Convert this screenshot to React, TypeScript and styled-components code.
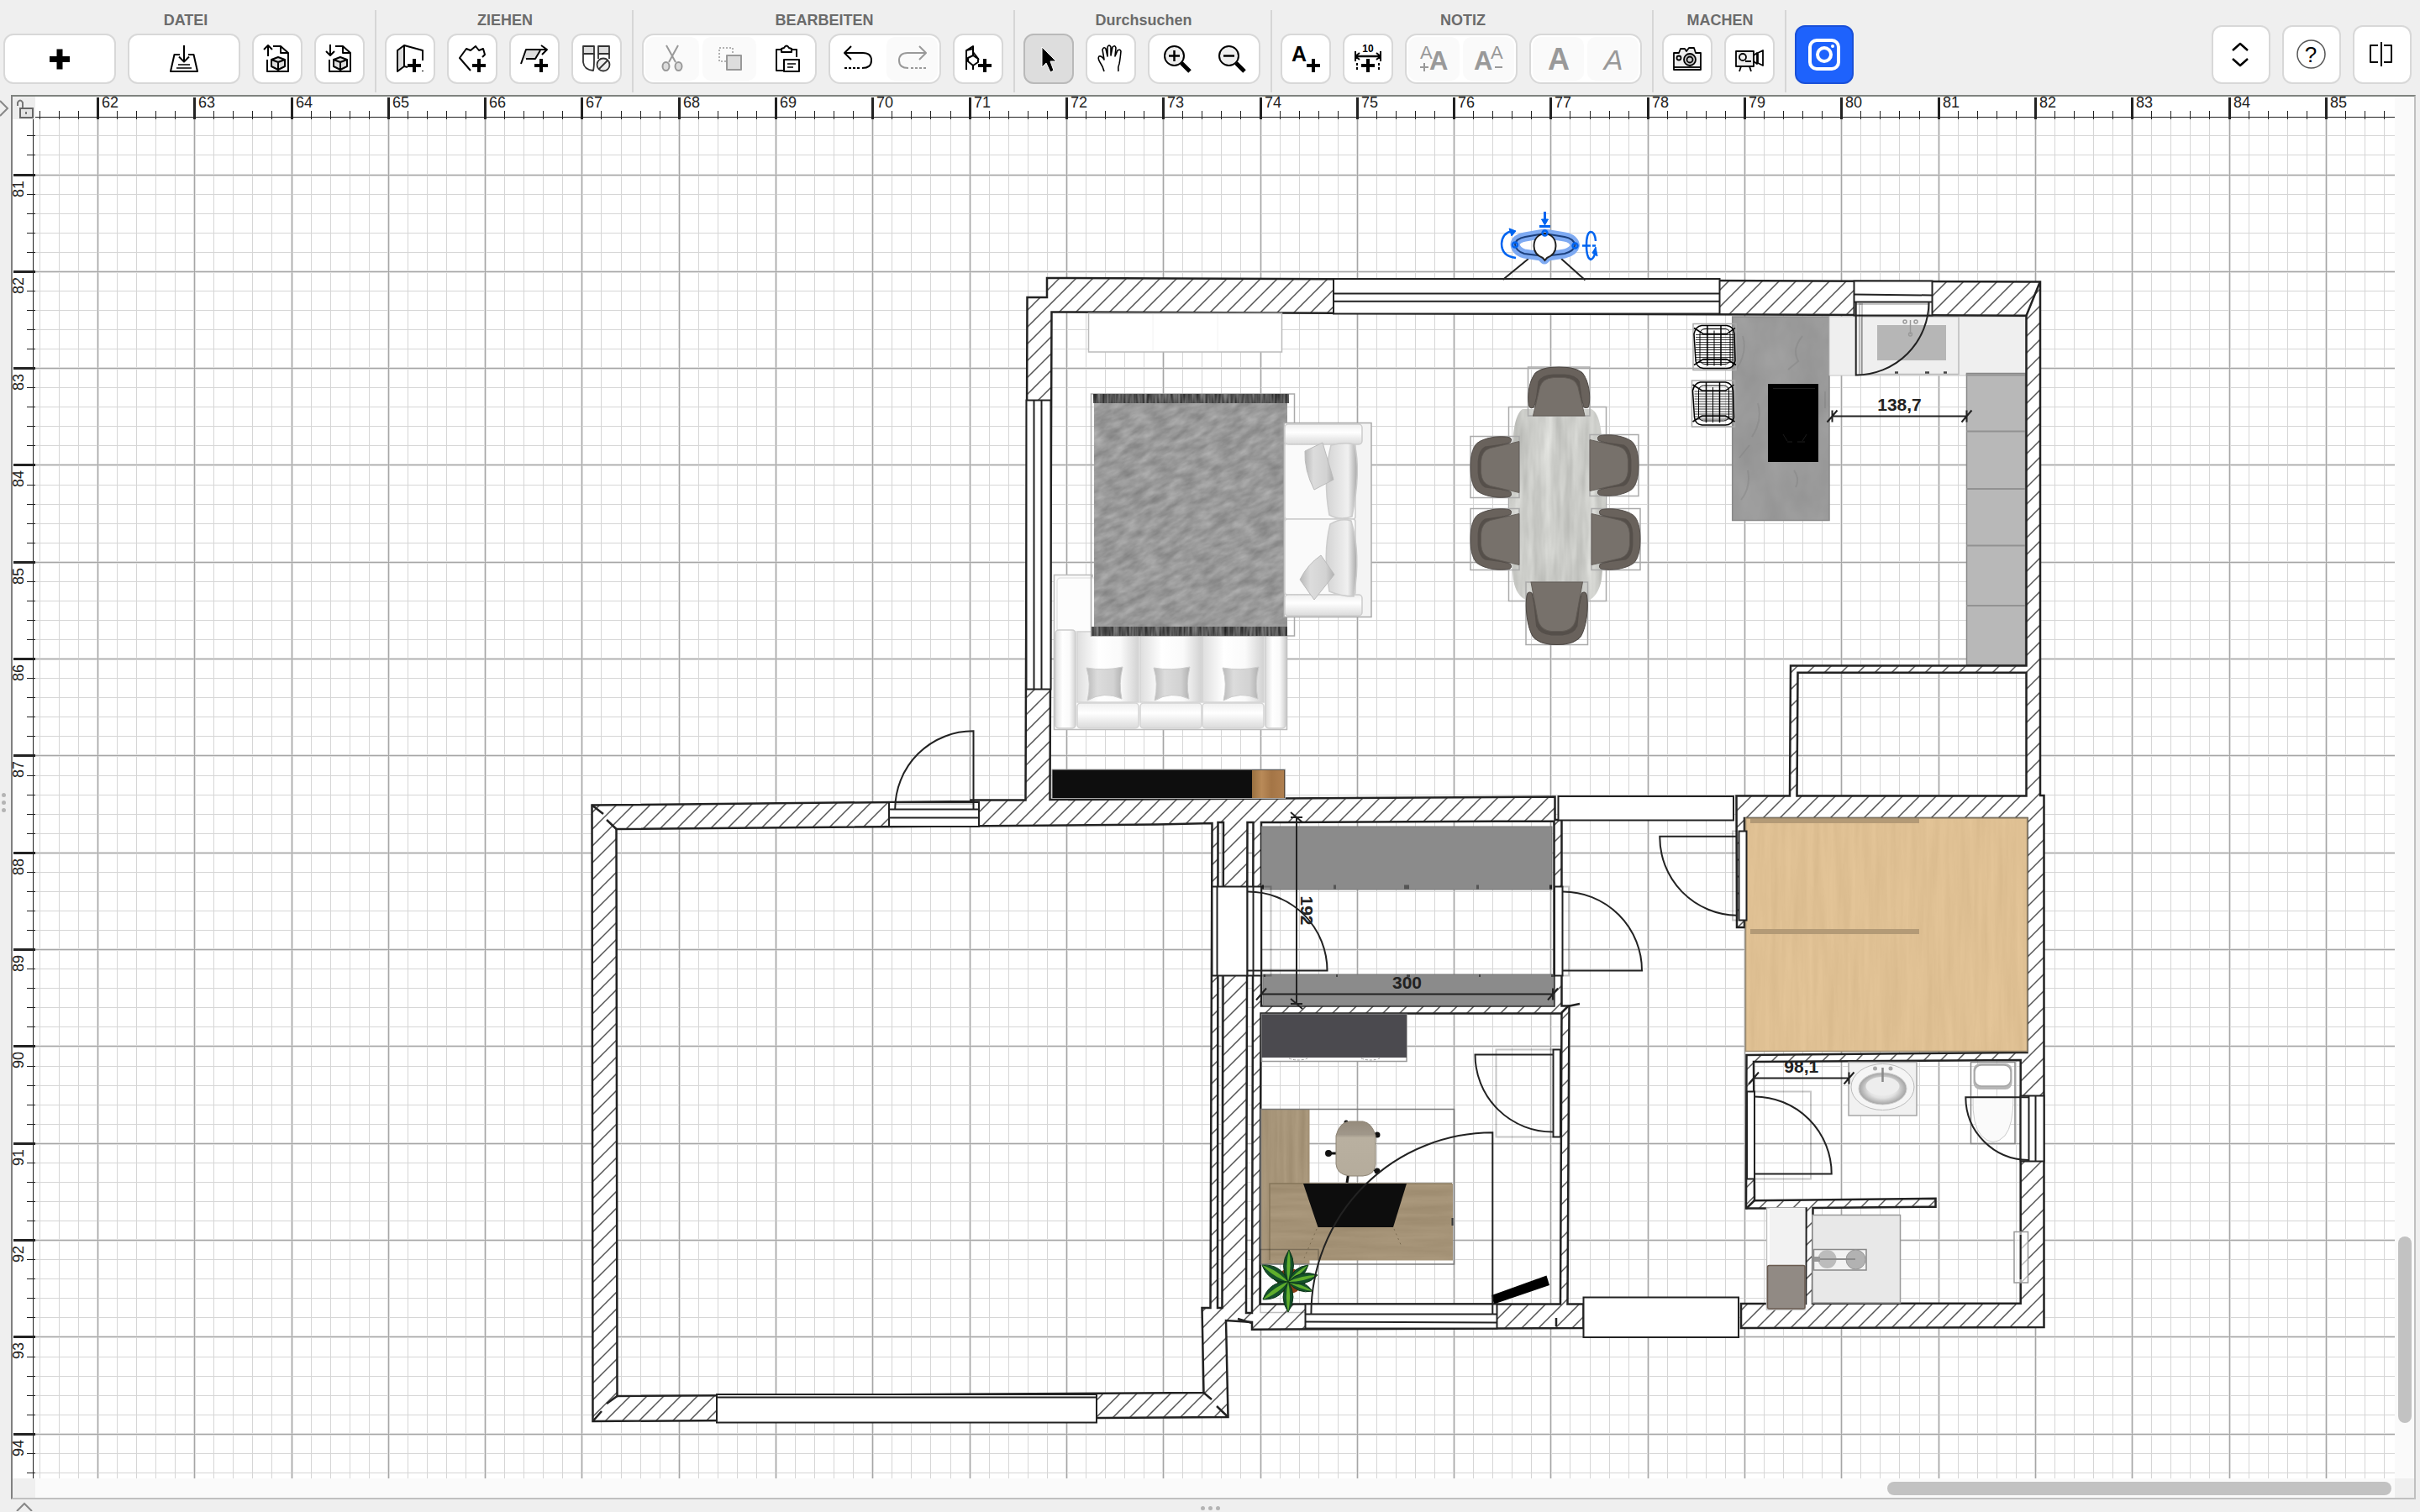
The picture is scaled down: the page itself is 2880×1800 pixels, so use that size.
import React, { useEffect, useState } from "react";
import styled, { createGlobalStyle, css } from "styled-components";

const INK = "#222222";
const FONT = '"Liberation Sans", Arial, Helvetica, sans-serif';

const GlobalStyle = createGlobalStyle`
  *, *::before, *::after { box-sizing: border-box; }
  html, body, #root { height: 100%; }
  body { margin: 0; background: #efefef; font-family: ${FONT}; color: ${INK}; }
`;

/* ---------- shell ---------- */

const Page = styled.div`
  display: flex;
  flex-direction: column;
  height: 100vh;
  overflow: hidden;
  background: #efefef;
`;

const Toolbar = styled.header`
  display: flex;
  flex: none;
  align-items: flex-start;
  padding: 12px 10px 3px 4px;
`;

const Group = styled.section<{ $first?: boolean }>`
  flex: none;
  height: 98px;
  padding: 2px 12px 0 ${(p) => (p.$first ? 0 : 10)}px;
  border-right: 2px solid #d6d6d6;
`;

const GroupTitle = styled.h2`
  margin: 0 0 6px;
  padding-left: 4px;
  font-size: 18px;
  line-height: 20px;
  font-weight: 700;
  text-align: center;
  color: #6b6b6b;
`;

const ButtonRow = styled.div`
  display: flex;
  gap: 14px;
`;

const face = css`
  display: flex;
  align-items: center;
  justify-content: center;
  padding: 0;
  font-family: inherit;
  color: #000;
  svg { display: block; flex: none; overflow: visible; }
`;

const ToolButton = styled.button<{ $wide?: boolean; $active?: boolean }>`
  ${face}
  width: ${(p) => (p.$wide ? 134 : 60)}px;
  height: 60px;
  border: 2px solid ${(p) => (p.$active ? "#b9b9b9" : "#d8d8d8")};
  border-radius: 12px;
  background: ${(p) => (p.$active ? "#dddddd" : "#ffffff")};
`;

const Segmented = styled.div<{ $three?: boolean }>`
  display: flex;
  gap: 4px;
  width: ${(p) => (p.$three ? 208 : 134)}px;
  height: 60px;
  padding: 2px;
  border: 2px solid #d8d8d8;
  border-radius: 14px;
  background: #fff;
`;

const Segment = styled.button`
  ${face}
  flex: 1;
  border: 0;
  border-radius: 10px;
  background: transparent;
  &:disabled { background: #fafafa; color: #999; }
`;

const LargeButton = styled.button<{ $brand?: boolean }>`
  ${face}
  width: 70px;
  height: 70px;
  border: 2px solid ${(p) => (p.$brand ? "#1a50d8" : "#d8d8d8")};
  border-radius: 12px;
  background: ${(p) => (p.$brand ? "#1e62fc" : "#ffffff")};
  color: ${(p) => (p.$brand ? "#fff" : "#000")};
`;

const BrandSlot = styled.div`
  padding: 18px 0 0 10px;
`;

const RightTools = styled.div`
  display: flex;
  gap: 14px;
  margin-left: auto;
  padding-top: 18px;
`;

const Workspace = styled.main`
  display: flex;
  flex: 1;
  min-height: 0;
  padding-right: 5px;
`;

const SideHandle = styled.div`
  display: flex;
  flex: none;
  flex-direction: column;
  align-items: flex-start;
  justify-content: space-between;
  width: 13px;
  padding: 5px 0 14px;
`;

const BottomHandle = styled.footer`
  display: grid;
  grid-template-columns: 1fr auto 1fr;
  align-items: center;
  flex: none;
  height: 15px;
`;

const BareButton = styled.button`
  padding: 0;
  border: 0;
  background: none;
  svg { display: block; }
  footer > & { justify-self: start; margin-left: 18px; }
`;

const Grip = styled.div<{ $vertical?: boolean }>`
  display: flex;
  flex-direction: ${(p) => (p.$vertical ? "column" : "row")};
  gap: 4px;
  padding: ${(p) => (p.$vertical ? "0 0 0 2px" : "6px 0 0")};
  i { width: 5px; height: 5px; border-radius: 50%; background: #b4b4b4; }
`;

const Pane = styled.div`
  display: grid;
  flex: 1;
  min-width: 0;
  grid-template-columns: 27px minmax(0, 1fr) 23px;
  grid-template-rows: 27px minmax(0, 1fr) 23px;
  border: 2px solid #c0c0c0;
  border-top-color: #7f837f;
  border-left-color: #808080;
  background: #efefef;
`;

const LockCorner = styled.button`
  ${face}
  border: 0;
  background: #ededed;
`;

const Surface = styled.svg<{ $ruler?: "x" | "y" }>`
  display: block;
  width: 100%;
  height: 100%;
  background: #fff;
  overflow-x: ${(p) => (p.$ruler === "y" ? "visible" : "clip")};
  overflow-y: ${(p) => (p.$ruler === "x" ? "visible" : "clip")};
`;

const VTrack = styled.div`
  display: flex;
  flex-direction: column;
  justify-content: flex-end;
  grid-column: 3;
  grid-row: 1 / 3;
  padding: 4px 3px 66px 4px;
  background: #fafafa;
`;

const HTrack = styled.div`
  display: flex;
  justify-content: flex-end;
  grid-column: 2;
  grid-row: 3;
  padding: 4px 4px 3px;
  background: #fafafa;
`;

const VThumb = styled.div`
  height: 222px;
  border-radius: 8px;
  background: #c2c2c2;
`;

const HThumb = styled.div`
  width: 600px;
  border-radius: 8px;
  background: #c2c2c2;
`;

/* ---------- icons ---------- */

const Icon = ({ children, size = 36, w = 2 }: { children: React.ReactNode; size?: number; w?: number }) => (
  <svg width={size} height={size} viewBox={`0 0 ${size} ${size}`} fill="none" stroke="currentColor" strokeWidth={w} strokeLinejoin="round" aria-hidden="true">
    {children}
  </svg>
);

const Plus = ({ x = 26, y = 26, r = 8, w = 4 }) => <path d={`M${x - r} ${y}H${x + r}M${x} ${y - r}V${y + r}`} strokeWidth={w} stroke="currentColor" />;

const PlusIcon = () => <Icon><Plus x={18} y={18.5} r={12} w={7} /></Icon>;
const SaveIcon = () => (
  <Icon>
    <path d="M13 13H6.500L2 33H34L29.500 13H23" />
    <path d="M18 2V21M12 15.500L18 21.500L24 15.500" />
    <path d="M11 25H25M9 29H27" strokeWidth={1.500} />
  </Icon>
);
const Cube = () => (
  <g>
    <path d="M11 19L19 16L27 19V27L19 31L11 27Z" fill="#ddd" />
    <path d="M11 19L19 22L27 19M19 22V31" />
  </g>
);
const ImportIcon = () => <Icon><path d="M13 3H22L31 11V33H6V19M22 3V11H31" /><path d="M7 15V2M2 7L7 2L12 7" /><Cube /></Icon>;
const ExportIcon = () => <Icon><path d="M13 3H22L31 11V33H6V19M22 3V11H31" /><path d="M7 1V14M2 9L7 14L12 9" /><Cube /></Icon>;
const WallIcon = () => (
  <Icon>
    <path d="M3 8L11 2V27L3 33Z" fill="#ddd" />
    <path d="M11 2L33 8V20M33 32V33M11 27L15 28" />
    <Plus x={23} />
  </Icon>
);
const RoomIcon = () => <Icon><path d="M16 32L3 17L11 6L16 8L22 3L26 8L31 6L33 13L30 16" /><Plus /></Icon>;
const PolylineIcon = () => (
  <Icon>
    <path d="M9 7H26L19 20L6 18Z" fill="#ddd" stroke="none" />
    <path d="M2 24L8 7H32M26 2L33 7L27 13M25 8L19 18L8 18" />
    <Plus />
  </Icon>
);
const FurnishIcon = () => (
  <Icon w={1.800}>
    <g stroke="#333">
      <path d="M2 3H15V12H2ZM20 3H33V12H20Z" fill="#ddd" />
      <path d="M2 12V22Q3 31 14 32Q15 28 15 20V12M20 12V18M33 12V18" />
      <circle cx="26" cy="25" r="7.500" fill="#eee" />
      <path d="M21 30L31 20" />
    </g>
  </Icon>
);
const CutIcon = () => (
  <Icon>
    <path d="M11 2L22 22M25 2L14 22" />
    <ellipse cx="10.500" cy="27" rx="4" ry="5" fill="#ddd" />
    <ellipse cx="25.500" cy="27" rx="4" ry="5" fill="#ddd" />
  </Icon>
);
const CopyIcon = () => (
  <Icon>
    <rect x="6" y="5" width="16" height="16" strokeDasharray="2 2" strokeWidth={1.500} />
    <rect x="15" y="14" width="17" height="17" fill="#ddd" />
  </Icon>
);
const PasteIcon = () => (
  <Icon>
    <path d="M12 7H6V32H15M24 7H30V16" />
    <path d="M12 10V6L15 5Q18 0 21 5L24 6V10Z" />
    <path d="M15 19H33V33H15Z" fill="#fff" />
    <path d="M19 24H29M19 28H26" strokeWidth={1.500} />
  </Icon>
);
const undoShape = (
  <>
    <path d="M2 11H24Q34 11 34 20Q34 29 23 29" />
    <path d="M10 3L2 11L10 19" />
    <path d="M2 29H20" strokeDasharray="3 2" />
  </>
);
const UndoIcon = () => <Icon>{undoShape}</Icon>;
const RedoIcon = () => <Icon><g transform="translate(36 0) scale(-1 1)">{undoShape}</g></Icon>;
const DoorIcon = () => (
  <Icon>
    <path d="M4 31V8L12 3V31M4 8L12 6M12 10L19 19" />
    <path d="M12 14L18 18V22L12 26L6 21V17Z" fill="#fff" />
    <Plus />
  </Icon>
);
const ArrowIcon = () => (
  <Icon><path d="M10 4V28L15 23L20 34L24 32L20 21H27Z" fill="#000" stroke="#fff" strokeWidth={1} /></Icon>
);
const HandIcon = () => (
  <Icon w={1.600}>
    <path d="M10 33Q9 28 5 22Q2 17 4 15Q7 14 10 19L8 7Q10 3 12 6L14 15V4Q16 0 18 4V14L20 4Q23 1 24 5L23 15L26 8Q29 6 30 9Q29 19 28 24Q26 28 27 33" />
  </Icon>
);
const ZoomInIcon = () => (
  <Icon><circle cx="14.500" cy="14.500" r="11.500" fill="#eee" /><path d="M8 14.500H21M14.500 8V21" strokeWidth={2.500} /><path d="M23 23L33 33" strokeWidth={5} /></Icon>
);
const ZoomOutIcon = () => (
  <Icon><circle cx="14.500" cy="14.500" r="11.500" fill="#eee" /><path d="M8 14.500H21" strokeWidth={2.500} /><path d="M23 23L33 33" strokeWidth={5} /></Icon>
);

const Glyph = styled.text`
  font-family: ${FONT};
  fill: currentColor;
  stroke: none;
`;

const TextIcon = () => <Icon><Glyph x="1" y="21" fontSize="25" fontWeight="700">A</Glyph><Plus x={27} /></Icon>;
const MeasureIcon = () => (
  <Icon>
    <Glyph x="18" y="10" fontSize="12" fontWeight="700" textAnchor="middle">10</Glyph>
    <path d="M3 15H33" strokeWidth={2.500} />
    <path d="M8 11L3 15L8 19M28 11L33 15L28 19M3 9V21M33 9V21" />
    <path d="M5 23V32M31 23V32" strokeDasharray="3 2" />
    <Plus x={18} />
  </Icon>
);
const BiggerIcon = () => (
  <Icon><Glyph x="1" y="18" fontSize="22">A</Glyph><Glyph x="12" y="31" fontSize="31" fontWeight="700">A</Glyph><path d="M1 28H11M6 23V33" /></Icon>
);
const SmallerIcon = () => (
  <Icon><Glyph x="0" y="31" fontSize="31" fontWeight="700">A</Glyph><Glyph x="20" y="18" fontSize="22">A</Glyph><path d="M25 28H34" /></Icon>
);
const BoldIcon = () => (
  <Icon><Glyph x="18" y="31" fontSize="36" fontWeight="700" textAnchor="middle" stroke="currentColor">A</Glyph></Icon>
);
const ItalicIcon = () => <Icon><Glyph x="18" y="31" fontSize="34" fontStyle="italic" textAnchor="middle">A</Glyph></Icon>;
const CameraIcon = () => (
  <Icon w={1.800}>
    <path d="M2 11H8L10 6H15L17 9L20 5H26L28 11H34V31H2Z" fill="#eee" />
    <circle cx="21" cy="19" r="7" fill="#ccc" />
    <circle cx="21" cy="19" r="3.500" />
    <circle cx="8" cy="17" r="2.500" />
    <path d="M2 28H34" />
  </Icon>
);
const VideoIcon = () => (
  <Icon w={1.800}>
    <path d="M2 9H23V27H2Z" fill="#eee" />
    <path d="M23 14L27 11V24L23 21ZM28 11L34 8V26L28 23Z" />
    <circle cx="10" cy="16" r="4" />
    <path d="M13 21H20M8 27L6 33M18 27L20 33" />
  </Icon>
);
const InstagramIcon = () => (
  <Icon size={40} w={4}><rect x="3" y="3" width="34" height="34" rx="8" /><circle cx="20" cy="20" r="8" /><circle cx="30" cy="10" r="2" fill="#fff" stroke="none" /></Icon>
);
const SortIcon = () => <Icon w={2.500}><path d="M8 13L17 5L26 13M8 23L17 31L26 23" /></Icon>;
const HelpIcon = () => (
  <Icon>
    <circle cx="17.500" cy="17.500" r="16.500" stroke="#555" strokeWidth={1.500} />
    <Glyph x="17" y="27" fontSize="26" textAnchor="middle">?</Glyph>
  </Icon>
);
const SplitIcon = () => <Icon><path d="M13 7H4V27H13M20 7H29V27H20M17 3V32" /></Icon>;
const LockIcon = () => (
  <svg width="24" height="24" viewBox="0 0 24 24" fill="none" stroke="#777" strokeWidth="2" aria-hidden="true">
    <path d="M4 9V5Q7 0 10 5V12" />
    <rect x="7" y="12" width="15" height="11" fill="#e4e4e4" stroke="#666" />
    <path d="M14 16V19" />
  </svg>
);

/* ---------- scale of the plan: pixels per metre and screen origins ---------- */

const STEP_X = 115.3;
const STEP_Y = 115.33;
const atX = (m: number) => Math.floor(116.4 + (m - 62) * STEP_X);
const atY = (m: number) => Math.floor(208 + (m - 81) * STEP_Y);
const range = (from: number, to: number) => Array.from({ length: Math.max(0, to - from) }, (_, i) => from + i);
const FIFTHS = [1, 2, 3, 4];

type View = { width: number; height: number };

const useView = (): View => {
  const read = () => ({ width: window.innerWidth, height: window.innerHeight });
  const [view, setView] = useState<View>(read);
  useEffect(() => {
    const update = () => setView(read());
    window.addEventListener("resize", update);
    return () => window.removeEventListener("resize", update);
  }, []);
  return view;
};

const columnsFor = (v: View) => range(61, 63 + Math.ceil(v.width / STEP_X));
const rowsFor = (v: View) => range(80, 82 + Math.ceil(v.height / STEP_Y));

const RulerTop = ({ view }: { view: View }) => (
  <Surface $ruler="x">
    <g transform="translate(-42 -115)">
      <path d="M42 139.500H6000" stroke={INK} shapeRendering="crispEdges" />
      {columnsFor(view).map((m) => (
        <g key={m} shapeRendering="crispEdges">
          <path d={`M${atX(m) + 0.5} 116V142`} stroke={INK} strokeWidth="3" />
          <path d={FIFTHS.map((f) => `M${atX(m + f / 5) + 0.5} 132V142`).join("")} stroke={INK} />
          {m > 61 && atX(m) < view.width - 60 && <Glyph x={atX(m) + 5} y="128" fontSize="18">{m}</Glyph>}
        </g>
      ))}
    </g>
  </Surface>
);

const RulerLeft = ({ view }: { view: View }) => (
  <Surface $ruler="y">
    <g transform="translate(-15 -142)">
      <path d="M39.500 142V6000" stroke={INK} shapeRendering="crispEdges" />
      {rowsFor(view).map((m) => (
        <g key={m} shapeRendering="crispEdges">
          <path d={`M16 ${atY(m) + 0.5}H42`} stroke={INK} strokeWidth="3" />
          <path d={FIFTHS.map((f) => `M32 ${atY(m + f / 5) + 0.5}H42`).join("")} stroke={INK} />
          {m > 80 && atY(m) < view.height - 70 && (
            <Glyph transform={`translate(28 ${atY(m) + 27}) rotate(-90)`} fontSize="18">{m}</Glyph>
          )}
        </g>
      ))}
    </g>
  </Surface>
);

const Grid = ({ view }: { view: View }) => {
  const columns = columnsFor(view);
  const rows = rowsFor(view);
  const minor =
    columns.map((m) => FIFTHS.map((f) => `M${atX(m + f / 5) + 0.5} 142V6000`).join("")).join("") +
    rows.map((m) => FIFTHS.map((f) => `M42 ${atY(m + f / 5) + 0.5}H6000`).join("")).join("");
  const major = columns.map((m) => `M${atX(m) + 0.5} 142V6000`).join("") + rows.map((m) => `M42 ${atY(m) + 0.5}H6000`).join("");
  return (
    <g shapeRendering="crispEdges" fill="none">
      <path stroke="#d6d6d6" d={minor} />
      <path stroke="#e0e0e0" strokeWidth="3" d={major} />
      <path stroke="#a6a6a6" d={major} />
    </g>
  );
};

/* ---------- drawing helpers ---------- */

const Grain = ({ id, freq, gain, rgb, octaves = 3 }: { id: string; freq: string; gain: number; rgb: number[]; octaves?: number }) => (
  <filter id={id} x="0" y="0" width="100%" height="100%" colorInterpolationFilters="sRGB">
    <feTurbulence type="fractalNoise" baseFrequency={freq} numOctaves={octaves} seed="4" />
    <feColorMatrix values={rgb.map((c) => `${gain} 0 0 0 ${c / 255 - gain / 2}`).join(" ") + " 0 0 0 0 1"} />
    <feComposite in2="SourceGraphic" operator="in" />
  </filter>
);

const Defs = () => (
  <defs>
    <pattern id="hatch" width="20" height="20" patternUnits="userSpaceOnUse">
      <path d="M-2 14L14 -2M10 22L22 10" stroke="#555" strokeWidth="1.500" />
    </pattern>
    <Grain id="rug" freq="0.050 0.120" gain={0.24} rgb={[153, 153, 153]} octaves={3} />
    <Grain id="marble" freq="0.080 0.012" gain={0.24} rgb={[204, 205, 201]} />
    <Grain id="stone" freq="0.030 0.020" gain={0.08} rgb={[154, 154, 154]} />
    <Grain id="oak" freq="0.120 0.008" gain={0.06} rgb={[223, 192, 147]} />
    <Grain id="deskV" freq="0.150 0.008" gain={0.1} rgb={[166, 148, 120]} />
    <Grain id="deskH" freq="0.008 0.100" gain={0.1} rgb={[164, 146, 118]} />
    <Grain id="fringe" freq="0.400 0.050" gain={0.6} rgb={[85, 85, 85]} octaves={1} />
    <clipPath id="rugClip"><rect x="1302" y="469" width="230" height="288" /></clipPath>
    <linearGradient id="armV" x1="0" x2="1"><stop offset="0" stopColor="#dedede" /><stop offset=".35" stopColor="#fff" /><stop offset=".7" stopColor="#fafafa" /><stop offset="1" stopColor="#d2d2d2" /></linearGradient>
    <linearGradient id="armH" x1="0" x2="0" y1="0" y2="1"><stop offset="0" stopColor="#efefef" /><stop offset=".4" stopColor="#fff" /><stop offset="1" stopColor="#dadada" /></linearGradient>
    <linearGradient id="cushion" x1="0" x2="1"><stop offset="0" stopColor="#b9b9b9" /><stop offset=".3" stopColor="#dcdcdc" /><stop offset=".75" stopColor="#d2d2d2" /><stop offset="1" stopColor="#b0b0b0" /></linearGradient>
    <linearGradient id="bolster" x1="0" x2="1"><stop offset="0" stopColor="#d4d4d4" /><stop offset=".7" stopColor="#f0f0f0" /><stop offset="1" stopColor="#a8a8a8" /></linearGradient>
    <linearGradient id="officeSeat" x1="0" x2="0" y1="0" y2="1"><stop offset="0" stopColor="#958b7c" /><stop offset=".24" stopColor="#a0978a" /><stop offset=".3" stopColor="#b9b0a0" /><stop offset="1" stopColor="#b5ac9c" /></linearGradient>
    <radialGradient id="basin"><stop offset="0" stopColor="#fff" /><stop offset=".6" stopColor="#e2e2e2" /><stop offset="1" stopColor="#a2a2a2" /></radialGradient>
    <linearGradient id="sideWood" x1="0" x2="1"><stop offset="0" stopColor="#99703f" /><stop offset=".3" stopColor="#b98a58" /><stop offset=".6" stopColor="#a47546" /><stop offset="1" stopColor="#b08050" /></linearGradient>
  </defs>
);

const WALLS = [
  "M1246 331L2428 335.500V947H2432.500V1580L2072 1581V1552H2149L2149.500 1438.500H2078L2078.500 1256L2404 1253H2412.500V974H2076V1104H2067L2066.500 947.500H2130L2131 792.500H2411.500V375.700L1251.500 371.500L1249.500 952L1850.500 948.500V976H1858.500V1197.500H1867.500L1865.500 1552.500H1884.500V1581L1490 1582.700V1574L1459 1572L1461.500 1687L705.500 1692L704.500 958.500L1155.500 954V952.500H1220.500L1222.500 354H1246Z",
  "M2139.500 800.700H2411.500V947.500H2138.500Z",
  "M2087 1264L2404.700 1262V1551.700H2157L2157.500 1438L2303.500 1436.700V1426.700L2088 1429.300Z",
  "M733.500 987L1377 981.500L1442.500 980L1440.500 1557H1430.500L1432.500 1658L734.500 1662Z",
  "M1449.500 979H1456L1454.500 1557H1449Z",
  "M1484.500 979H1491.500L1490 1563H1483Z",
  "M1501 979L1849.500 977.500V1197.500H1501Z",
  "M1500.500 1206.500H1858.500L1857 1552.500H1499.500Z",
].join("");

const Walls = () => (
  <g>
    <path d={WALLS} fill="#fff" fillRule="evenodd" />
    <path d={WALLS} fill="url(#hatch)" fillRule="evenodd" stroke={INK} strokeWidth="2.500" />
    <path
      d="M2411.500 375.700L2428 335M704.500 958.500L718 969M722 976L733.500 987M705.500 1692L716 1680M722 1671L734.500 1662M1432.500 1658L1442 1666M1448 1674L1461.500 1687M1858 1206L1866 1198L1880 1195M1852 1569V1579M1473 1570L1490 1575M2078 1439L2088 1429"
      fill="none" stroke={INK} strokeWidth="2.500"
    />
  </g>
);

const Opening = ({ x, y, w, h, lines = "" }: { x: number; y: number; w: number; h: number; lines?: string }) => (
  <g stroke={INK} strokeWidth="2">
    <rect x={x} y={y} width={w} height={h} fill="#fff" />
    <path d={lines} fill="none" />
  </g>
);

const Openings = () => (
  <g>
    <Opening x={1587} y={332} w={459.500} h={41.500} lines="M1587 349.500H2046M1587 358.700H2046" />
    <Opening x={2206.500} y={334.500} w={93} h={41} lines="M2206 350.500L2299 351.500M2206 359.500H2299" />
    <Opening x={1221.500} y={476.500} w={29} h={344} lines="M1230.500 476V820M1239.500 476V820" />
    <Opening x={1058} y={955} w={107} h={29} lines="M1058 963.500H1165M1058 973.500H1165" />
    <Opening x={853} y={1660} w={452} h={33.500} lines="M853 1663.500H1305" />
    <Opening x={1553.500} y={1552.500} w={228} h={29} lines="M1553 1564.500H1781M1553 1573.500L1781 1574.500" />
    <Opening x={1442.500} y={1055.500} w={42} h={106} lines="M1448.500 1055V1161" />
    <Opening x={1484.500} y={1055.500} w={16.500} h={106} lines="M1491.500 1055V1161" />
    <Opening x={1850} y={1055.500} w={9.500} h={106} />
    <Opening x={1854.500} y={948} w={208.500} h={28.500} />
    <Opening x={2069.500} y={989.500} w={9} h={106} />
    <Opening x={1848.500} y={1249.500} w={8.500} h={104} />
    <Opening x={2079} y={1299.500} w={9} h={104} />
    <Opening x={2404.700} y={1304.500} w={27.800} h={78} lines="M2414.500 1304V1382M2422.500 1304V1382" />
    <Opening x={1884.500} y={1544.500} w={184.500} h={47.500} />
    <g fill="none" stroke="#000" strokeOpacity=".22" strokeWidth="2">
      <path d="M1501 1055.500H1512.500V1161.500H1501M1860 1055.500H1867V1161.500H1860M2067 989.500H2062V1095.500H2067M1848 1249.500H1780.500V1353.500H1848M2088 1299.500H2155V1403.500H2088M2209 362H2296V376M1065 957H1158" />
      <rect x="2213" y="362" width="3" height="84" />
    </g>
    <g fill="none" stroke={INK} strokeWidth="2">
      <path d="M2208.700 359V446.500A87 87 0 0 0 2295.500 359.500" />
      <path d="M1158.500 963V870.300A93 93 0 0 0 1065.200 963" />
      <path d="M1485 1155.500H1579.500A94 94 0 0 0 1485 1061.500" />
      <path d="M1860 1155.500H1954A94 94 0 0 0 1860 1061.500" />
      <path d="M2067 995.700H1975.300A93 93 0 0 0 2067 1089.700" />
      <path d="M1848.500 1255.500H1755.500A92 92 0 0 0 1848.500 1347.500" />
      <path d="M1776.300 1564V1348.300A216 216 0 0 0 1560.400 1564" />
      <path d="M2088 1397.500H2179.700A92 92 0 0 0 2088 1305.500" />
      <path d="M2414 1306.300H2339.300A75 75 0 0 0 2414 1381" />
    </g>
  </g>
);

const Chair = ({ x, y, w, h, turn = 0 }: { x: number; y: number; w: number; h: number; turn?: number }) => {
  const side = turn % 180 !== 0;
  const sx = (side ? h : w) / 73;
  const sy = (side ? w : h) / 74;
  return (
    <g>
      <rect x={x} y={y} width={w} height={h} fill="none" stroke="#aaa" strokeWidth="1.500" />
      <g transform={`translate(${x + w / 2} ${y + h / 2}) rotate(${turn}) scale(${sx} ${sy}) translate(-36.500 -37)`}>
        <path d="M1 58C-1 44 1 22 8 10C14 2 26 0 36.500 0C47 0 59 2 65 10C72 22 74 44 72 58Q71 64 66 61L58 24H15L7 61Q2 64 1 58Z" fill="#69625c" stroke="#4c4743" strokeWidth="1" />
        <path d="M8 60L12 22Q16 12 30 11H43Q57 12 61 22L65 60Z" fill="#554f4a" />
        <path d="M6 74L14 30Q17 17 30 16H43Q56 17 59 30L67 74Z" fill="#77716b" stroke="#615b55" strokeWidth="1" />
      </g>
    </g>
  );
};

const Stool = ({ x, y }: { x: number; y: number }) => (
  <g transform={`translate(${x} ${y})`} fill="none" stroke="#000" strokeWidth="1.500">
    <rect x="0" y="0" width="51" height="55" stroke="#aaa" />
    <path d="M10 2H40Q48 3 49 12L50 44Q48 53 40 53H12Q4 52 3 44L1 12Q3 3 10 2Z" />
    <rect x="8" y="6" width="36" height="42" rx="6" strokeWidth="1" />
    <path d="M17 2V50M33 2V50" />
    <path d="M25 8V50" strokeWidth="1" />
    <path d="M1 5L12 12H40L50 5M1 49L12 42H40L51 49" />
    <path d={range(0, 12).map((i) => `M3 ${13 + i * 3}H48`).join("")} strokeWidth="1" strokeOpacity=".75" />
  </g>
);

const Pillow = ({ x, y, turn = 0 }: { x: number; y: number; turn?: number }) => (
  <path transform={`translate(${x} ${y}) rotate(${turn})`} d="M-21 -19Q0 -15 22 -20Q17 0 21 18Q0 8 -20 20Q-15 0 -21 -19Z" fill="url(#cushion)" stroke="#ccc" />
);

const LivingRoom = () => (
  <g>
    <rect x="1295.500" y="373" width="230" height="46" fill="#fff" stroke="#bbb" strokeWidth="1.500" />
    <path d="M1372 374V418M1449 374V418" stroke="#f2f2f2" />

    <g stroke="#ccc" strokeWidth="1.500">
      <path d="M1254.500 684.500H1300V757H1531.500V868.500H1254.500Z" fill="#fcfcfc" stroke="#bbb" />
      <rect x="1258" y="688" width="52" height="64" rx="4" fill="#fdfdfd" stroke="#e6e6e6" />
      {[1282, 1357, 1431].map((x) => (
        <g key={x} stroke="#d4d4d4">
          <rect x={x} y="752" width="73" height="84" fill="url(#armV)" />
          <rect x={x} y="837" width="73" height="30" rx="4" fill="url(#armH)" />
        </g>
      ))}
      <rect x="1256" y="750" width="24" height="117" rx="4" fill="url(#armV)" />
      <rect x="1506" y="752" width="24" height="115" rx="4" fill="url(#armV)" />
    </g>
    <Pillow x={1314} y={814} />
    <Pillow x={1394} y={814} />
    <Pillow x={1476} y={814} />

    <rect x="1298.500" y="469" width="242" height="288" fill="none" stroke="#aaa" strokeWidth="1.500" />
    <g clipPath="url(#rugClip)">
      <rect x="1180" y="380" width="480" height="470" transform="rotate(-24 1417 613)" filter="url(#rug)" />
    </g>
    <rect x="1301" y="469" width="233" height="11" filter="url(#fringe)" />
    <rect x="1299" y="746" width="233" height="11" filter="url(#fringe)" />

    <g stroke="#ccc" strokeWidth="1.500">
      <rect x="1528" y="503.500" width="104" height="231" fill="#f4f4f4" stroke="#aaa" />
      <rect x="1529" y="528" width="84" height="90" rx="3" fill="#fafafa" />
      <rect x="1529" y="618" width="84" height="90" rx="3" fill="#fafafa" />
      <rect x="1529" y="505" width="92" height="24" rx="4" fill="url(#armH)" />
      <rect x="1529" y="708" width="92" height="25" rx="4" fill="url(#armH)" />
      <path d="M1584 530Q1600 526 1612 529Q1620 560 1609 615Q1594 620 1582 613Q1574 570 1584 530Z" fill="url(#bolster)" />
      <path d="M1583 624Q1596 616 1608 620Q1620 660 1611 710Q1596 710 1582 704Q1574 660 1583 624Z" fill="url(#bolster)" />
    </g>
    <path d="M1553 537L1574 527L1587 571L1564 583Q1552 560 1553 537Z" fill="url(#cushion)" stroke="#bbb" />
    <path d="M1572 661L1588 684L1564 714L1547 690Q1556 672 1572 661Z" fill="url(#cushion)" stroke="#bbb" />

    <rect x="1252" y="916" width="277.500" height="34.500" fill="#0e0e0e" stroke="#aaa" />
    <rect x="1490" y="917" width="38.500" height="33" fill="url(#sideWood)" />
  </g>
);

const Dining = () => (
  <g>
    <rect x="1795.500" y="484.500" width="116" height="231" fill="none" stroke="#aaa" strokeWidth="1.500" />
    <path d="M1812 487H1894Q1904 492 1906 520Q1916 600 1906 690Q1902 710 1890 715H1818Q1804 710 1801 690Q1791 600 1801 516Q1804 492 1812 487Z" filter="url(#marble)" />
    <Chair x={1818.500} y={437} w={73.500} h={58} />
    <Chair x={1816} y={693} w={73.500} h={74.500} turn={180} />
    <Chair x={1750} y={519.500} w={58} h={73} turn={270} />
    <Chair x={1750} y={605.500} w={58} h={73} turn={270} />
    <Chair x={1892} y={517.500} w={58} h={73} turn={90} />
    <Chair x={1894} y={605.500} w={58} h={73} turn={90} />
  </g>
);

const Kitchen = () => (
  <g>
    <rect x="2061.700" y="377" width="115.300" height="242.500" filter="url(#stone)" />
    <g fill="none" stroke="#7c7c7c" strokeWidth="2" opacity=".35">
      <path d="M2066 440Q2080 420 2074 400M2085 520Q2098 500 2092 480M2135 560Q2142 570 2137 580M2072 595Q2084 580 2080 560M2145 400Q2132 416 2140 430L2128 440M2172 466V486M2070 545L2082 530" />
    </g>
    <rect x="2061.700" y="377" width="115.300" height="242.500" fill="none" stroke="#888" strokeWidth="1.500" />
    <Stool x={2015} y={385.500} />
    <Stool x={2013.500} y={453} />
    <rect x="2104" y="457" width="60" height="93" fill="#000" />
    <path d="M2110 462.500H2160M2122 517L2127 525M2150 517L2145 525M2127 526H2133M2139 526H2148" stroke="#1c1c1c" fill="none" />
    <path d="M2177 377H2411V445H2340V447H2177Z" fill="#efefef" stroke="#c4c4c4" />
    <rect x="2215.500" y="377" width="115.500" height="68.500" fill="#efefef" stroke="#bbb" strokeWidth="1.500" />
    <rect x="2234" y="387" width="82" height="42" fill="#b6b6b6" />
    <g fill="none" stroke="#999" strokeWidth="1.500">
      <circle cx="2267" cy="383" r="2" /><circle cx="2280" cy="383" r="2" />
      <path d="M2273.500 381V398" /><circle cx="2273.500" cy="398" r="2" />
    </g>
    <path d="M2255 443.500H2259M2291 443.500H2296M2313 443.500H2317" stroke="#444" strokeWidth="2.500" />
    <rect x="2340.500" y="444.500" width="70" height="347" fill="#b8b8b8" stroke="#888" strokeWidth="1.500" />
    <path d="M2340 446.500H2410M2340 513.500H2410M2340 582H2410M2340 649.500H2410M2340 721H2410" stroke="#929292" strokeWidth="2" />
  </g>
);

const WoodRoom = () => (
  <g>
    <rect x="2077.500" y="974" width="335" height="277.500" filter="url(#oak)" />
    <path d="M2083 977H2284M2083 1109H2284" stroke="#b39a76" strokeWidth="6" />
    <rect x="2077.500" y="974" width="335" height="277.500" fill="none" stroke="#9c8a6e" strokeWidth="1.500" />
  </g>
);

const Storage = () => (
  <g>
    <rect x="1501.500" y="984" width="345.500" height="75" fill="#8b8b8b" stroke="#777" />
    <rect x="1503" y="1160" width="346" height="37" fill="#8b8b8b" stroke="#777" />
    <path d="M1587 1056H1590M1671 1056H1677M1757 1056H1760" stroke="#555" strokeWidth="5" />
    <path d="M1502 1056H1504M1844 1056H1847" stroke="#222" strokeWidth="5" />
    <path d="M1504 1161.500H1506M1590 1161.500H1592M1674 1161.500H1678M1760 1161.500H1762M1846 1161.500H1849" stroke="#444" strokeWidth="3" />
  </g>
);

const LEAVES: [number, number, number][] = [
  [1514, 1520, 5], [1557, 1506, 6], [1562, 1537, 6], [1502, 1506, 8], [1568, 1518, 7], [1503, 1547, 8], [1534, 1488, 7], [1533, 1562, 7],
];

const Plant = () => (
  <g>
    <rect x="1500" y="1487.500" width="69" height="75" fill="none" stroke="#000" strokeOpacity=".25" strokeWidth="1.500" />
    <circle cx="1535" cy="1525" r="15" fill="#8a3c16" />
    {LEAVES.map(([tx, ty, w]) => {
      const cx = 1533, cy = 1526;
      const dx = tx - cx, dy = ty - cy, len = Math.hypot(dx, dy);
      const nx = (-dy / len) * w, ny = (dx / len) * w;
      const mx = cx + dx * 0.5, my = cy + dy * 0.5;
      const blade = (k: number) => `M${cx} ${cy}Q${mx + nx * k} ${my + ny * k} ${tx} ${ty}Q${mx - nx * k} ${my - ny * k} ${cx} ${cy}Z`;
      return (
        <g key={`${tx}-${ty}`}>
          <path d={blade(1.7)} fill="#14502a" stroke="#0b3317" />
          <path d={blade(0.6)} fill="#5fae2c" />
        </g>
      );
    })}
  </g>
);

const Office = () => (
  <g>
    <rect x="1501.500" y="1207.500" width="172.500" height="56" fill="#fff" stroke="#999" strokeWidth="1.500" />
    <rect x="1501.500" y="1207.500" width="172.500" height="51.500" fill="#4b4a4f" />
    <path d="M1534 1260Q1545 1264 1556 1260M1620 1260Q1631 1264 1642 1260" fill="none" stroke="#999" strokeDasharray="3 2" />
    <rect x="1500.500" y="1321" width="58" height="184" filter="url(#deskV)" />
    <rect x="1511" y="1409" width="218" height="91.500" filter="url(#deskH)" />
    <path d="M1511 1500V1409H1728" fill="none" stroke="#857559" strokeWidth="1.500" />
    <rect x="1500.500" y="1320.500" width="230" height="184.500" fill="none" stroke="#777" strokeWidth="1.500" />
    <path d="M1728.500 1450V1459" stroke="#333" strokeWidth="2" />
    <g stroke="#111" strokeWidth="3" fill="#111">
      <path d="M1582 1373H1592M1602 1335L1610 1345M1630 1352L1638 1351M1630 1390L1638 1394M1605 1395L1603 1408" fill="none" />
      <circle cx="1581" cy="1373" r="2.500" /><circle cx="1639" cy="1351" r="2" /><circle cx="1639" cy="1394" r="2" /><circle cx="1602" cy="1336" r="1" />
    </g>
    <path d="M1590 1352Q1594 1336 1606 1335H1622Q1633 1337 1637 1352V1386Q1636 1399 1622 1400H1606Q1591 1398 1590 1386Z" fill="url(#officeSeat)" stroke="#8d8475" />
    <path d="M1551 1409H1674L1658 1461H1568.500Z" fill="#0d0d0d" />
    <path d="M1567 1463L1552 1498M1659 1463L1668 1484" stroke="#7a6b50" strokeDasharray="2 4" />
    <Plant />
    <path d="M1775 1542L1840.500 1518.500L1844 1530L1778 1552.500Z" fill="#000" />
  </g>
);

const Bath = () => (
  <g>
    <rect x="2200" y="1264.500" width="81" height="63.500" fill="#f1f1f1" stroke="#a6a6a6" strokeWidth="1.500" />
    <ellipse cx="2240.500" cy="1294" rx="37.500" ry="27.500" fill="#f5f5f5" stroke="#bbb" />
    <ellipse cx="2240.500" cy="1296" rx="28.500" ry="19" fill="url(#basin)" stroke="#ccc" />
    <ellipse cx="2240.500" cy="1293" rx="20" ry="11" fill="#ededed" />
    <path d="M2240.500 1271V1288" stroke="#888" strokeWidth="2.500" />
    <circle cx="2231.500" cy="1272" r="2.500" fill="#aaa" /><circle cx="2250" cy="1272" r="2.500" fill="#aaa" />

    <rect x="2345.500" y="1264.500" width="52.500" height="97" fill="none" stroke="#888" strokeWidth="1.500" />
    <path d="M2348 1306H2396Q2396 1340 2386 1352Q2372 1367 2358 1352Q2347 1340 2348 1306Z" fill="#fafafa" stroke="#ccc" />
    <rect x="2348.500" y="1266" width="46" height="31" rx="8" fill="#b6b6b6" />
    <rect x="2350" y="1268" width="43" height="25" rx="8" fill="#fff" stroke="#a4a4a4" strokeWidth="1.500" />

    <rect x="2157" y="1446.500" width="104.500" height="104.500" fill="#e8e8e8" stroke="#999" strokeWidth="1.500" />
    <rect x="2158.500" y="1487.500" width="62.500" height="24.500" fill="#f2f2f2" stroke="#888" strokeWidth="1.500" />
    <circle cx="2174.500" cy="1499" r="11" fill="#bcbcbc" />
    <circle cx="2208.500" cy="1499.500" r="11.500" fill="#b2b2b2" stroke="#999" />
    <path d="M2160 1499H2208" stroke="#8c8c8c" strokeWidth="2" />
    <path d="M2159 1499H2166" stroke="#999" strokeWidth="6" />

    <rect x="2102.500" y="1438" width="45.500" height="121" fill="#fff" stroke="#c0c0c0" strokeWidth="1.500" />
    <rect x="2106" y="1438" width="42" height="68" fill="#f2f2f2" />
    <rect x="2103.500" y="1506.500" width="44.500" height="51.500" rx="2" fill="#918a84" stroke="#6a5b50" strokeWidth="1.500" />

    <rect x="2397" y="1466.500" width="16.500" height="60.500" fill="#fff" fillOpacity=".6" stroke="#999" strokeWidth="1.500" />
    <path d="M2404.700 1470V1523" stroke={INK} strokeWidth="2" />
  </g>
);

const DimensionText = styled.text`
  font-family: ${FONT};
  font-size: 21px;
  font-weight: 700;
  fill: ${INK};
  text-anchor: middle;
`;

const Dimension = ({ x, y, length, label, turn = 0, gap = 7 }: { x: number; y: number; length: number; label: string; turn?: number; gap?: number }) => (
  <g transform={`translate(${x} ${y}) rotate(${turn})`}>
    <path d={`M0 0H${length}M0 -7V7M${length} -7V7M-6 7L6 -7M${length - 6} 7L${length + 6} -7`} fill="none" stroke={INK} strokeWidth="2" />
    <DimensionText x={length / 2} y={-gap}>{label}</DimensionText>
  </g>
);

const Dimensions = () => (
  <g>
    <Dimension x={2180.500} y={495.500} length={160} label="138,7" />
    <Dimension x={1501} y={1183.500} length={347} label="300" />
    <Dimension x={2087} y={1283.500} length={113.500} label="98,1" />
    <Dimension x={1543} y={973} length={222} label="192" turn={90} gap={5} />
  </g>
);

const Observer = () => (
  <g fill="none">
    <path d="M1819 308L1788.500 333M1858 308L1886.500 333.500" stroke={INK} strokeWidth="2" />
    <path d="M1803 291Q1804 284 1815 282L1838 278L1862 282Q1873 284 1874.500 292Q1873 299 1862 302L1842 305L1838 309L1834 305L1814 302Q1804 299 1803 291Z" stroke="#7eaaf2" strokeWidth="11" strokeLinejoin="round" />
    <path d="M1803 291Q1804 284 1815 282L1838 278L1862 282Q1873 284 1874.500 292Q1873 299 1862 302L1838 305L1814 302Q1804 299 1803 291Z" stroke="#1b3f7c" strokeWidth="2" />
    <path d="M1838.500 278C1847 279 1851.500 285 1851.500 293C1851.500 301 1846 305 1841 307L1838.500 310L1836 307C1831 305 1825.500 301 1825.500 293C1825.500 285 1830 279 1838.500 278Z" fill="#fff" stroke={INK} strokeWidth="2" />
    <g stroke="#0064f0" strokeWidth="2.500">
      <circle cx="1803" cy="291.500" r="3" /><circle cx="1874.500" cy="292.500" r="3" /><circle cx="1838.500" cy="277.500" r="3" />
      <path d="M1838.500 252V266M1832 269.500H1845" strokeWidth="3" />
      <path d="M1834.500 261L1838.500 268L1842.500 261Z" fill="#0064f0" strokeWidth="1" />
      <path d="M1804 307Q1787 305 1787 290Q1788 277 1800 275" />
      <path d="M1796 272L1804 275L1799 281Z" fill="#0064f0" strokeWidth="1" />
      <path d="M1899 287Q1898 276 1893 276Q1888 277 1888 292Q1888 307 1893 309Q1897 308 1899 299" />
      <path d="M1895 301L1899 294L1901 305Z" fill="#0064f0" strokeWidth="1" />
      <path d="M1883 292.500H1900" strokeDasharray="4 2" />
    </g>
  </g>
);

const Plan = ({ view }: { view: View }) => (
  <Surface role="img" aria-label="Grundriss">
    <Defs />
    <g transform="translate(-42 -142)">
      <Grid view={view} />
      <Kitchen />
      <Walls />
      <LivingRoom />
      <Dining />
      <WoodRoom />
      <Storage />
      <Office />
      <Bath />
      <Openings />
      <Dimensions />
      <Observer />
    </g>
  </Surface>
);

/* ---------- app ---------- */

export default function App() {
  const view = useView();
  return (
    <Page>
      <GlobalStyle />
      <Toolbar>
        <Group $first>
          <GroupTitle>DATEI</GroupTitle>
          <ButtonRow>
            <ToolButton $wide aria-label="Neu"><PlusIcon /></ToolButton>
            <ToolButton $wide aria-label="Speichern"><SaveIcon /></ToolButton>
            <ToolButton aria-label="Importieren"><ImportIcon /></ToolButton>
            <ToolButton aria-label="Exportieren"><ExportIcon /></ToolButton>
          </ButtonRow>
        </Group>
        <Group>
          <GroupTitle>ZIEHEN</GroupTitle>
          <ButtonRow>
            <ToolButton aria-label="Wand"><WallIcon /></ToolButton>
            <ToolButton aria-label="Raum"><RoomIcon /></ToolButton>
            <ToolButton aria-label="Polylinie"><PolylineIcon /></ToolButton>
            <ToolButton aria-label="Einrichten"><FurnishIcon /></ToolButton>
          </ButtonRow>
        </Group>
        <Group>
          <GroupTitle>BEARBEITEN</GroupTitle>
          <ButtonRow>
            <Segmented $three>
              <Segment disabled aria-label="Ausschneiden"><CutIcon /></Segment>
              <Segment disabled aria-label="Kopieren"><CopyIcon /></Segment>
              <Segment aria-label="Einfügen"><PasteIcon /></Segment>
            </Segmented>
            <Segmented>
              <Segment aria-label="Rückgängig"><UndoIcon /></Segment>
              <Segment disabled aria-label="Wiederholen"><RedoIcon /></Segment>
            </Segmented>
            <ToolButton aria-label="Möbel hinzufügen"><DoorIcon /></ToolButton>
          </ButtonRow>
        </Group>
        <Group>
          <GroupTitle>Durchsuchen</GroupTitle>
          <ButtonRow>
            <ToolButton $active aria-pressed="true" aria-label="Auswählen"><ArrowIcon /></ToolButton>
            <ToolButton aria-label="Verschieben"><HandIcon /></ToolButton>
            <Segmented>
              <Segment aria-label="Vergrößern"><ZoomInIcon /></Segment>
              <Segment aria-label="Verkleinern"><ZoomOutIcon /></Segment>
            </Segmented>
          </ButtonRow>
        </Group>
        <Group>
          <GroupTitle>NOTIZ</GroupTitle>
          <ButtonRow>
            <ToolButton aria-label="Text"><TextIcon /></ToolButton>
            <ToolButton aria-label="Bemaßung"><MeasureIcon /></ToolButton>
            <Segmented>
              <Segment disabled aria-label="Schrift größer"><BiggerIcon /></Segment>
              <Segment disabled aria-label="Schrift kleiner"><SmallerIcon /></Segment>
            </Segmented>
            <Segmented>
              <Segment disabled aria-label="Fett"><BoldIcon /></Segment>
              <Segment disabled aria-label="Kursiv"><ItalicIcon /></Segment>
            </Segmented>
          </ButtonRow>
        </Group>
        <Group>
          <GroupTitle>MACHEN</GroupTitle>
          <ButtonRow>
            <ToolButton aria-label="Foto"><CameraIcon /></ToolButton>
            <ToolButton aria-label="Video"><VideoIcon /></ToolButton>
          </ButtonRow>
        </Group>
        <BrandSlot>
          <LargeButton $brand aria-label="Instagram"><InstagramIcon /></LargeButton>
        </BrandSlot>
        <RightTools>
          <LargeButton aria-label="Ebenen"><SortIcon /></LargeButton>
          <LargeButton aria-label="Hilfe"><HelpIcon /></LargeButton>
          <LargeButton aria-label="Ansicht teilen"><SplitIcon /></LargeButton>
        </RightTools>
      </Toolbar>
      <Workspace>
        <SideHandle>
          <BareButton aria-label="Seitenleiste öffnen">
            <svg width="12" height="22" viewBox="0 0 12 22" fill="none" stroke="#888" strokeWidth="2"><path d="M0 2L9 11L0 20" /></svg>
          </BareButton>
          <Grip $vertical><i /><i /><i /></Grip>
          <span />
        </SideHandle>
        <Pane>
          <LockCorner aria-label="Plan sperren"><LockIcon /></LockCorner>
          <RulerTop view={view} />
          <VTrack><VThumb /></VTrack>
          <RulerLeft view={view} />
          <Plan view={view} />
          <HTrack><HThumb /></HTrack>
        </Pane>
      </Workspace>
      <BottomHandle>
        <BareButton aria-label="Untere Leiste öffnen">
          <svg width="22" height="12" viewBox="0 0 22 12" fill="none" stroke="#888" strokeWidth="2"><path d="M2 12L11 3L20 12" /></svg>
        </BareButton>
        <Grip><i /><i /><i /></Grip>
      </BottomHandle>
    </Page>
  );
}
